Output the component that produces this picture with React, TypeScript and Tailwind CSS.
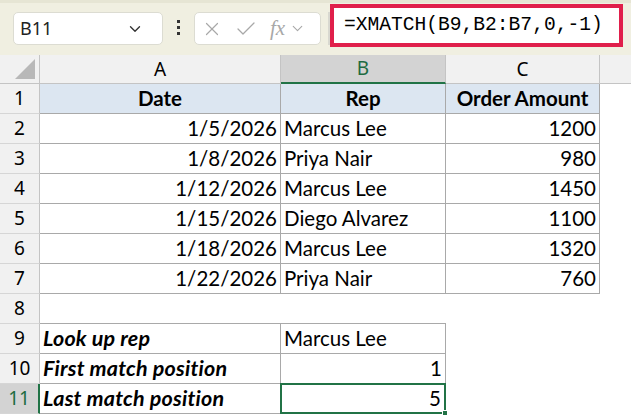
import { ChevronDown, X, Check } from "lucide-react";

const rows = [
  ["1/5/2026", "Marcus Lee", "1200"],
  ["1/8/2026", "Priya Nair", "980"],
  ["1/12/2026", "Marcus Lee", "1450"],
  ["1/15/2026", "Diego Alvarez", "1100"],
  ["1/18/2026", "Marcus Lee", "1320"],
  ["1/22/2026", "Priya Nair", "760"],
];

const cell = "h-[30px] flex items-center px-[3px] text-[20.5px] text-black font-['Lato',sans-serif] whitespace-nowrap";
const grid = "border-r border-b border-[#a9a9a9]";
const label = "font-bold italic text-[21.5px] tracking-[0.2px]";

function RowNum({ n, active }: { n: number; active?: boolean }) {
  return (
    <div
      className={
        "h-[30px] flex items-center justify-center text-[19px] font-['Noto_Sans',sans-serif] border-b border-[#d6d6d6] " +
        (active
          ? "bg-[#d3d3d3] text-[#1e6b41] border-r-2 border-r-[#217346]"
          : "bg-[#f1f1f1] text-black border-r border-r-[#c4c4c4]")
      }
    >
      {n}
    </div>
  );
}

export default function App() {
  return (
    <div className="w-[631px] h-[416px] overflow-hidden bg-white">
      {/* formula bar */}
      <div className="h-[55px] bg-[#f0efe1] border-t-[3px] border-[#e6e5d4] flex items-start relative">
        <div className="ml-[13px] mt-[9px] w-[150px] h-[33px] bg-white rounded-[5px] border border-[#dcdcd2] flex items-center pl-[6px] pr-[18px] justify-between">
          <span className="text-[18px] text-[#222] font-['Noto_Sans',sans-serif]">B11</span>
          <ChevronDown size={18} strokeWidth={1.8} className="text-[#333]" />
        </div>
        <div className="ml-[14px] mt-[17px] flex flex-col gap-[3px]">
          <span className="w-[3px] h-[3px] bg-[#333]" />
          <span className="w-[3px] h-[3px] bg-[#333]" />
          <span className="w-[3px] h-[3px] bg-[#333]" />
        </div>
        <div className="ml-[14px] mt-[9px] w-[127px] h-[33px] bg-white rounded-[5px] border border-[#dcdcd2] flex items-center pl-[6px] text-[#a8a8a8]">
          <X size={22} strokeWidth={1.3} />
          <Check size={24} strokeWidth={1.3} className="ml-[11px]" />
          <span className="ml-[12px] text-[21px] italic font-['Liberation_Serif',serif] leading-none">fx</span>
          <ChevronDown size={17} strokeWidth={1.6} className="ml-[4px]" />
        </div>
        <div className="ml-[7px] mt-[9px] w-[2px] h-[33px] bg-[#d8d8d0]" />
        <div className="absolute left-[330px] top-[1px] w-[293px] h-[43px] border-[4px] border-[#e01f4b] bg-white flex items-center pl-[10px]">
          <span className="text-[19.6px] text-black font-['Liberation_Mono',monospace]">=XMATCH(B9,B2:B7,0,-1)</span>
        </div>
      </div>

      {/* sheet */}
      <div className="grid grid-cols-[40px_241px_165px_154px_31px]">
        {/* column headers */}
        <div className="h-[29px] bg-[#f1f1f1] border-r border-b border-[#c4c4c4] relative">
          <div className="absolute right-[4px] bottom-[4px] w-0 h-0 border-l-[20px] border-l-transparent border-b-[20px] border-b-[#b8b8b8]" />
        </div>
        <div className="h-[29px] bg-[#f1f1f1] border-r border-b border-[#c4c4c4] flex items-center justify-center text-[19px] font-['Noto_Sans',sans-serif]">A</div>
        <div className="h-[29px] bg-[#d3d3d3] border-r border-r-[#c4c4c4] border-b-2 border-b-[#217346] flex items-center justify-center text-[19px] text-[#1e6b41] font-['Noto_Sans',sans-serif]">B</div>
        <div className="h-[29px] bg-[#f1f1f1] border-r border-b border-[#c4c4c4] flex items-center justify-center text-[19px] font-['Noto_Sans',sans-serif]">C</div>
        <div className="h-[29px] bg-[#f1f1f1] border-b border-[#c4c4c4]" />

        {/* row 1 headers */}
        <RowNum n={1} />
        <div className={cell + " " + grid + " bg-[#dce6f1] justify-center font-bold"}>Date</div>
        <div className={cell + " " + grid + " bg-[#dce6f1] justify-center font-bold"}>Rep</div>
        <div className={cell + " " + grid + " bg-[#dce6f1] justify-center font-bold"}>Order Amount</div>
        <div />

        {rows.map((r, i) => (
          <div key={i} className="contents">
            <RowNum n={i + 2} />
            <div className={cell + " " + grid + " justify-end"}>{r[0]}</div>
            <div className={cell + " " + grid}>{r[1]}</div>
            <div className={cell + " " + grid + " justify-end"}>{r[2]}</div>
            <div />
          </div>
        ))}

        {/* row 8 */}
        <RowNum n={8} />
        <div className="h-[30px] border-b border-[#a9a9a9]" />
        <div className="h-[30px] border-b border-[#a9a9a9]" />
        <div className="h-[30px]" />
        <div />

        {/* rows 9-11 */}
        <RowNum n={9} />
        <div className={cell + " " + grid + " " + label}>Look up rep</div>
        <div className={cell + " " + grid}>Marcus Lee</div>
        <div />
        <div />

        <RowNum n={10} />
        <div className={cell + " " + grid + " " + label}>First match position</div>
        <div className={cell + " " + grid + " justify-end"}>1</div>
        <div />
        <div />

        <RowNum n={11} active />
        <div className={cell + " " + grid + " " + label}>Last match position</div>
        <div className={cell + " justify-end relative border-2 border-[#217346] -mt-[1px] -ml-[1px] h-[31px]"}>
          5
          <span className="absolute -right-[4px] -bottom-[4px] w-[6px] h-[6px] bg-[#217346] border border-white" />
        </div>
        <div />
        <div />
      </div>
    </div>
  );
}
